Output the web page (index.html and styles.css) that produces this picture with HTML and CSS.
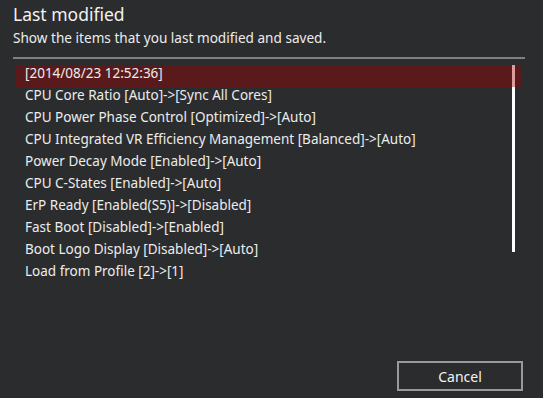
FILE: index.html
```html
<!DOCTYPE html>
<html lang="en">
<head>
    <meta charset="UTF-8">
    <meta name="viewport" content="width=device-width, initial-scale=1.0">
    <title>Last modified</title>
    <link rel="stylesheet" href="styles.css">
</head>
<body>
    <div class="dialog">
        <header class="dialog-head">
            <h1>Last modified</h1>
            <p>Show the items that you last modified and saved.</p>
        </header>

        <section class="changes">
            <ul class="change-list">
                <li class="selected">[2014/08/23 12:52:36]</li>
                <li>CPU Core Ratio [Auto]-&gt;[Sync All Cores]</li>
                <li>CPU Power Phase Control [Optimized]-&gt;[Auto]</li>
                <li>CPU Integrated VR Efficiency Management [Balanced]-&gt;[Auto]</li>
                <li>Power Decay Mode [Enabled]-&gt;[Auto]</li>
                <li>CPU C-States [Enabled]-&gt;[Auto]</li>
                <li>ErP Ready [Enabled(S5)]-&gt;[Disabled]</li>
                <li>Fast Boot [Disabled]-&gt;[Enabled]</li>
                <li>Boot Logo Display [Disabled]-&gt;[Auto]</li>
                <li>Load from Profile [2]-&gt;[1]</li>
            </ul>
            <div class="scrollbar"></div>
        </section>

        <footer class="dialog-foot">
            <button class="cancel-btn">Cancel</button>
        </footer>
    </div>
</body>
</html>
```

FILE: styles.css
```css
body {
    margin: 0;
    background-color: #2b2c2e;
    color: #ececec;
    font-family: "Noto Sans", "DejaVu Sans", sans-serif;
}

.dialog {
    height: 398px;
    display: flex;
    flex-direction: column;
}

.dialog-head {
    margin: 0 18px 0 13px;
    padding-top: 2px;
    border-bottom: 2px solid #808080;
}

.dialog-head h1 {
    margin: 0;
    font-size: 17.5px;
    font-weight: normal;
    line-height: 24px;
    color: #f2f2f2;
}

.dialog-head p {
    margin: 3px 0 10px;
    font-size: 13.6px;
    line-height: 18px;
}

.changes {
    position: relative;
    margin: 6px 21px 0 15px;
}

.change-list {
    list-style: none;
    margin: 0;
    padding: 0;
}

.change-list li {
    position: relative;
    z-index: 1;
    padding: 0 0 6px 10px;
    font-size: 13.5px;
    line-height: 16px;
    white-space: nowrap;
}

.change-list li.selected {
    background: rgba(164, 0, 0, 0.39);
}

.scrollbar {
    position: absolute;
    top: 0;
    left: 497px;
    width: 3px;
    height: 187px;
    background: #ffffff;
}

.dialog-foot {
    margin-top: auto;
    padding: 0 20px 7px 0;
    display: flex;
    justify-content: flex-end;
}

.cancel-btn {
    width: 126px;
    height: 30px;
    background: transparent;
    border: 2px solid #9a9a9a;
    color: #f2f2f2;
    font-family: "Noto Sans", "DejaVu Sans", sans-serif;
    font-size: 14px;
    cursor: pointer;
}
```
